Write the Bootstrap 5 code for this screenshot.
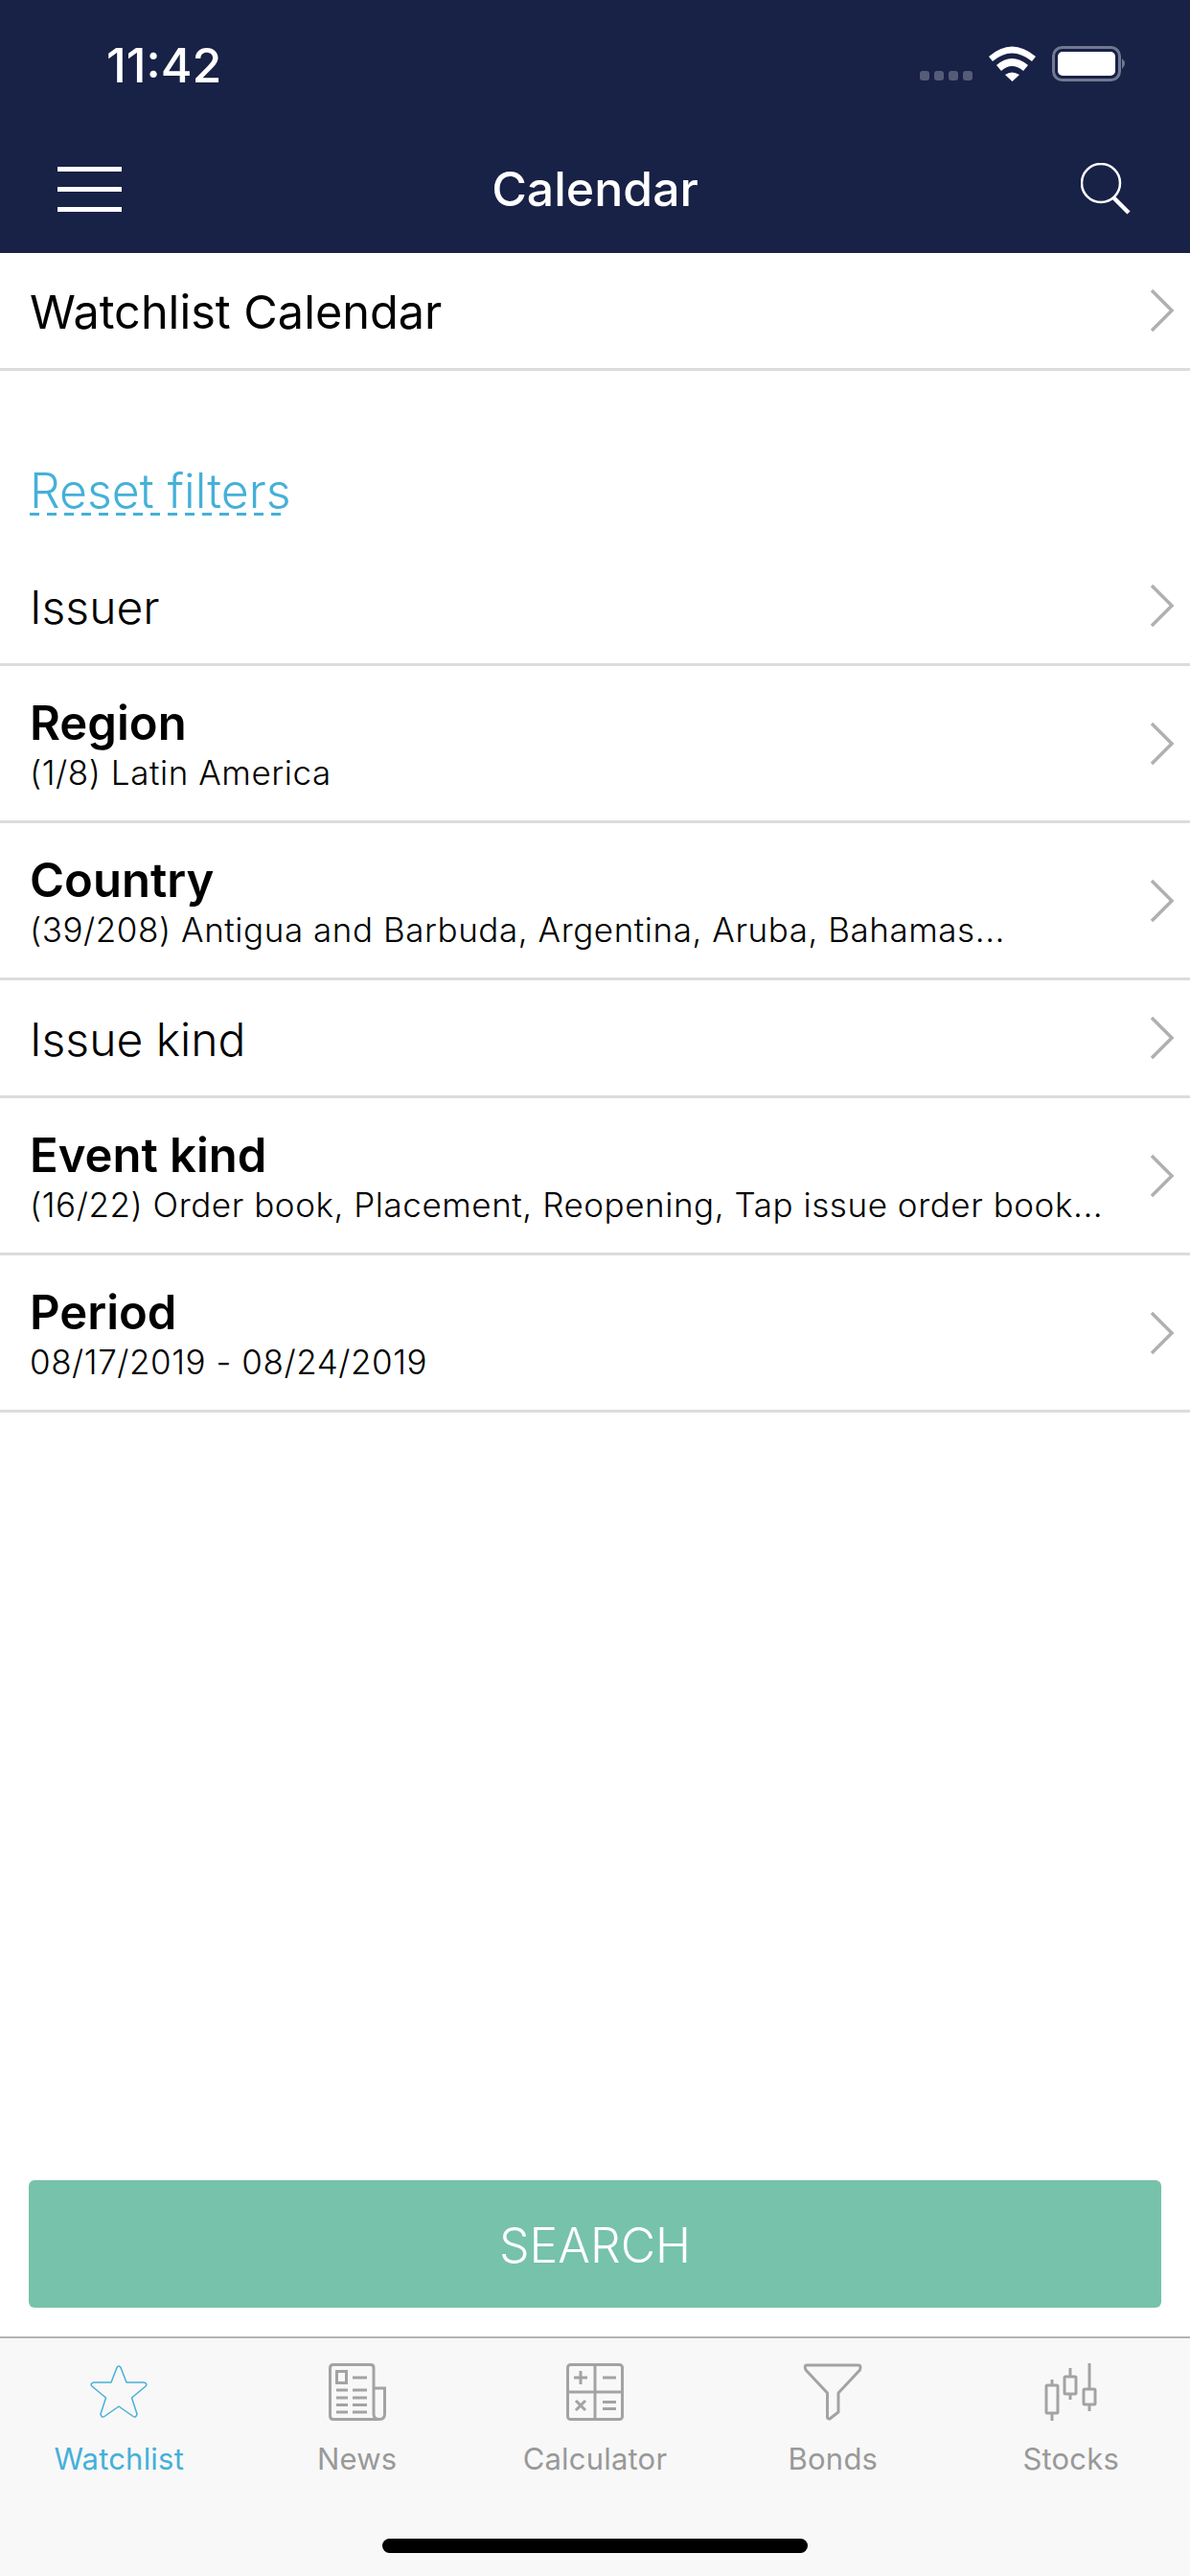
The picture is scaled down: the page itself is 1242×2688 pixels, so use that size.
<!DOCTYPE html>
<html lang="en">

<head>
    <meta charset="UTF-8">
    <meta name="viewport" content="width=device-width, initial-scale=1.0">
    <title>Calendar</title>

    <!-- Bootstrap CSS -->
    <link href="https://cdn.jsdelivr.net/npm/bootstrap@5.3.0/dist/css/bootstrap.min.css" rel="stylesheet">

    <!-- Custom CSS -->
    <style>
        body {
            height: 100vh;
            font-family: "Inter", "Liberation Sans", sans-serif;
            color: #000;
            background-color: #fff;
        }

        .app-header {
            height: 264px;
            background-color: #182146;
            color: #fff;
        }

        .status-row {
            height: 136px;
            padding: 0 65px 0 111px;
        }

        .status-time {
            font-size: 50px;
            font-weight: 500;
            letter-spacing: 0;
            line-height: 1;
            margin-top: -1px;
        }

        .title-row {
            height: 122px;
            padding: 0 62px 0 60px;
        }

        .title-text {
            font-size: 50px;
            font-weight: 500;
            line-height: 1;
            margin: 0;
        }

        .burger-bar {
            display: block;
            width: 67px;
            height: 5px;
            background-color: #fff;
        }

        .burger-wrap {
            gap: 16px;
        }

        .filter-list.list-group-flush .list-group-item {
            padding: 0 16px 0 31px;
            border-width: 0 0 3px;
            border-color: #dcdcdc;
            color: #000;
            display: flex;
            align-items: center;
            justify-content: space-between;
        }

        .row-single {
            height: 123px;
        }

        .row-double {
            height: 164px;
        }

        .row-text {
            margin-top: 5px;
        }

        .row-name {
            font-size: 48px;
            font-weight: 300;
            line-height: 60px;
            padding-top: 4px;
        }

        .row-name.is-top {
            font-size: 48.600px;
            font-weight: 400;
            padding-top: 3px;
        }

        .row-name.is-set {
            font-size: 49px;
            font-weight: 600;
            line-height: 56px;
            padding-top: 0;
        }

        .row-value {
            font-size: 35px;
            font-weight: 300;
            line-height: 46px;
            letter-spacing: 0.55px;
        }

        .reset-wrap {
            height: 185px;
            padding: 97px 0 0 31px;
        }

        .reset-link {
            display: inline-block;
            font-size: 50px;
            font-weight: 300;
            line-height: 56px;
            color: #45b0d8;
            text-decoration: none;
            background: repeating-linear-gradient(90deg, #45b0d8 0 10px, transparent 10px 18px) left 0 bottom 2px / 262px 3px no-repeat;
        }

        .search-wrap {
            padding: 0 30px 30px;
        }

        .search-btn {
            height: 133px;
            border: 0;
            border-radius: 6px;
            background-color: #76c2aa;
            color: #fff;
            font-size: 50px;
            font-weight: 300;
            padding-top: 10px;
        }

        .tab-bar {
            height: 250px;
            background-color: #f8f8f8;
            border-top: 2px solid #b4b4b4;
        }

        .tab-item {
            width: 20%;
            padding-top: 26px;
            color: #999;
            font-size: 31px;
            letter-spacing: 0.2px;
            line-height: 40px;
            text-decoration: none;
        }

        .tab-item svg {
            display: block;
            margin-bottom: 20px;
        }

        .tab-item.is-active {
            color: #45b0d8;
        }

        .home-bar {
            left: 399px;
            bottom: 24px;
            width: 444px;
            height: 15px;
            background-color: #000;
        }
    </style>
</head>

<body class="d-flex flex-column">
    <!-- Header -->
    <header class="app-header flex-shrink-0">
        <div class="status-row d-flex align-items-center justify-content-between">
            <span class="status-time">11:42</span>
            <svg width="217" height="40" viewBox="0 0 217 40">
                <g fill="#545c78">
                    <rect x="0" y="26" width="10" height="10" rx="3"/>
                    <rect x="15" y="26" width="10" height="10" rx="3"/>
                    <rect x="30" y="26" width="10" height="10" rx="3"/>
                    <rect x="45" y="26" width="10" height="10" rx="3"/>
                </g>
                <g fill="#fff">
                    <path d="M72 11 Q96 -10 121 11 L117 16 Q96 -1 76 16 Z"/>
                    <path d="M80 20 Q96 6 113 20 L108 26 Q96 16 85 26 Z"/>
                    <path d="M89 30 Q96 25 104 30 L96.500 37 Z"/>
                </g>
                <rect x="139.500" y="1.500" width="69" height="34" rx="9" fill="none" stroke="#727891" stroke-width="3"/>
                <rect x="144" y="6" width="60" height="25" rx="5" fill="#fff"/>
                <path d="M211 13 Q217 18 211 24 Z" fill="#727891"/>
            </svg>
        </div>
        <div class="title-row d-flex align-items-center justify-content-between position-relative">
            <div class="burger-wrap d-flex flex-column">
                <span class="burger-bar"></span>
                <span class="burger-bar"></span>
                <span class="burger-bar"></span>
            </div>
            <h1 class="title-text position-absolute top-50 start-50 translate-middle">Calendar</h1>
            <svg width="52" height="54" viewBox="0 0 52 54" fill="none" stroke="#fff">
                <circle cx="21" cy="21" r="20" stroke-width="2.500"/>
                <path d="M34 36 L50 52" stroke-width="4.500"/>
            </svg>
        </div>
    </header>

    <!-- Filters -->
    <main class="flex-grow-1">
        <div class="list-group list-group-flush filter-list">
            <a href="#" class="list-group-item row-single">
                <span class="row-name is-top">Watchlist Calendar</span>
                <svg width="26" height="46" viewBox="0 0 26 46" fill="none" stroke="#b0b0b0" stroke-width="3.500"><path d="M2 2 L23 23 L2 44"/></svg>
            </a>
        </div>

        <div class="reset-wrap"><a href="#" class="reset-link">Reset filters</a></div>

        <div class="list-group list-group-flush filter-list">
            <a href="#" class="list-group-item row-single">
                <span class="row-name">Issuer</span>
                <svg width="26" height="46" viewBox="0 0 26 46" fill="none" stroke="#b0b0b0" stroke-width="3.500"><path d="M2 2 L23 23 L2 44"/></svg>
            </a>
            <a href="#" class="list-group-item row-double">
                <span class="row-text">
                    <span class="row-name is-set d-block">Region</span>
                    <span class="row-value d-block">(1/8) Latin America</span>
                </span>
                <svg width="26" height="46" viewBox="0 0 26 46" fill="none" stroke="#b0b0b0" stroke-width="3.500"><path d="M2 2 L23 23 L2 44"/></svg>
            </a>
            <a href="#" class="list-group-item row-double">
                <span class="row-text">
                    <span class="row-name is-set d-block">Country</span>
                    <span class="row-value d-block">(39/208) Antigua and Barbuda, Argentina, Aruba, Bahamas...</span>
                </span>
                <svg width="26" height="46" viewBox="0 0 26 46" fill="none" stroke="#b0b0b0" stroke-width="3.500"><path d="M2 2 L23 23 L2 44"/></svg>
            </a>
            <a href="#" class="list-group-item row-single">
                <span class="row-name">Issue kind</span>
                <svg width="26" height="46" viewBox="0 0 26 46" fill="none" stroke="#b0b0b0" stroke-width="3.500"><path d="M2 2 L23 23 L2 44"/></svg>
            </a>
            <a href="#" class="list-group-item row-double">
                <span class="row-text">
                    <span class="row-name is-set d-block">Event kind</span>
                    <span class="row-value d-block">(16/22) Order book, Placement, Reopening, Tap issue order book...</span>
                </span>
                <svg width="26" height="46" viewBox="0 0 26 46" fill="none" stroke="#b0b0b0" stroke-width="3.500"><path d="M2 2 L23 23 L2 44"/></svg>
            </a>
            <a href="#" class="list-group-item row-double">
                <span class="row-text">
                    <span class="row-name is-set d-block">Period</span>
                    <span class="row-value d-block">08/17/2019 - 08/24/2019</span>
                </span>
                <svg width="26" height="46" viewBox="0 0 26 46" fill="none" stroke="#b0b0b0" stroke-width="3.500"><path d="M2 2 L23 23 L2 44"/></svg>
            </a>
        </div>
    </main>

    <!-- Search button -->
    <div class="search-wrap flex-shrink-0">
        <button type="button" class="btn search-btn w-100">SEARCH</button>
    </div>

    <!-- Tab bar -->
    <nav class="tab-bar d-flex flex-shrink-0 position-relative">
        <a href="#" class="tab-item is-active d-flex flex-column align-items-center">
            <svg width="62" height="60" viewBox="-1 -1 62 60" fill="none" stroke="#45b0d8" stroke-width="1.500" stroke-linejoin="round">
                <path d="M28 3.500 Q30 .5 32 3.500 L38 19 H56 Q60.500 20 58 23 L43.500 35 L49 52 Q48 56.500 45 54.500 L30 44 L15 54.500 Q12 56.500 11 52 L16.500 35 L2 23 Q-.5 20 4 19 H22 Z"/>
            </svg>
            Watchlist
        </a>
        <a href="#" class="tab-item d-flex flex-column align-items-center">
            <svg width="62" height="60" viewBox="-1 0 62 60" fill="none" stroke="#a3a3a3" stroke-width="3">
                <path d="M54 58.500 H5 Q1.500 58.500 1.500 55 V5 Q1.500 1.500 5 1.500 H44 Q47 1.500 47 5 V53 Q47 58.500 53 58.500 Q58.500 58.500 58.500 53 V26 H47"/>
                <rect x="8.500" y="8.500" width="10" height="12"/>
                <path d="M25 15 H40 M8 28 H20 M25 28 H40 M8 36 H20 M25 36 H40 M8 43.500 H20 M25 43.500 H40 M8 51 H20 M25 51 H40"/>
            </svg>
            News
        </a>
        <a href="#" class="tab-item d-flex flex-column align-items-center">
            <svg width="62" height="60" viewBox="-1 0 62 60" fill="none" stroke="#a3a3a3" stroke-width="3">
                <rect x="1.500" y="1.500" width="57" height="57" rx="3"/>
                <path d="M30 1.500 V58.500 M1.500 30 H58.500"/>
                <path d="M15 8 V22 M8 15 H22 M38 15 H52 M10 39 L20 49 M20 39 L10 49 M38 40.500 H52 M38 47.500 H52"/>
            </svg>
            Calculator
        </a>
        <a href="#" class="tab-item d-flex flex-column align-items-center">
            <svg width="62" height="60" viewBox="-1 0 62 60" fill="none" stroke="#a3a3a3" stroke-width="3" stroke-linejoin="round">
                <path d="M3 2 H57 Q60 2 58.500 7 L36 31 V51 L27 58 Q24.500 58 24.500 56 V31 L2 7 Q0 2 3 2 Z"/>
            </svg>
            Bonds
        </a>
        <a href="#" class="tab-item d-flex flex-column align-items-center">
            <svg width="56" height="60" viewBox="0 0 56 60" fill="none" stroke="#a3a3a3" stroke-width="3">
                <rect x="2" y="23" width="12" height="29" rx="1"/>
                <rect x="21" y="14" width="12" height="18" rx="1"/>
                <rect x="41" y="27" width="12" height="16" rx="1"/>
                <path d="M8 17 V23 M8 52 V60 M27 5 V14 M27 32 V38 M47 0 V27 M47 43 V50"/>
            </svg>
            Stocks
        </a>
        <span class="home-bar position-absolute rounded-pill"></span>
    </nav>

    <!-- Bootstrap JS -->
    <script src="https://cdn.jsdelivr.net/npm/bootstrap@5.3.0/dist/js/bootstrap.bundle.min.js"></script>
</body>

</html>
